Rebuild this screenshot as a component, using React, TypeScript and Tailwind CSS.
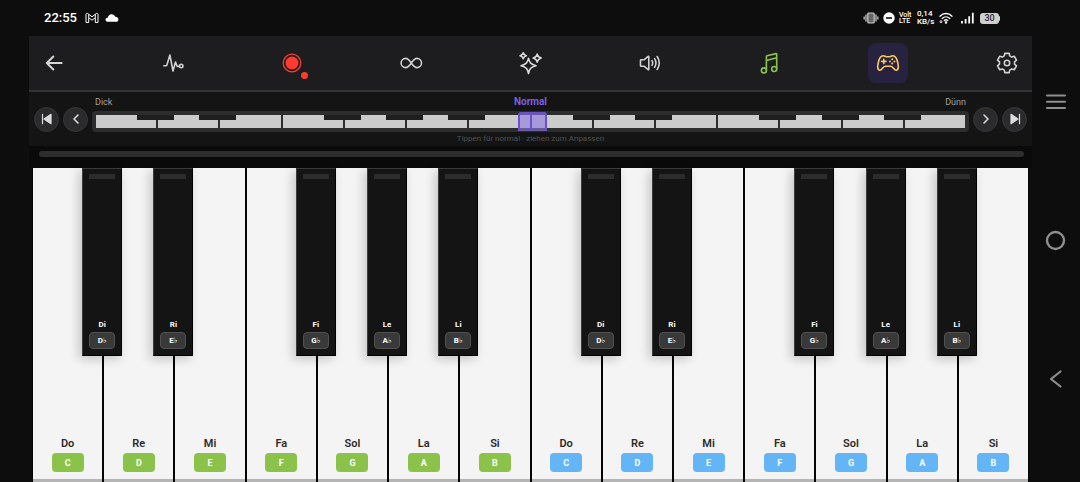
import type { ReactNode } from "react";
import { useState } from "react";

type Sharp = { solfege: string; note: string };
type Key = { solfege: string; note: string; sharp?: Sharp };

const OCTAVE: Key[] = [
  { solfege: "Do", note: "C", sharp: { solfege: "Di", note: "D" } },
  { solfege: "Re", note: "D", sharp: { solfege: "Ri", note: "E" } },
  { solfege: "Mi", note: "E" },
  { solfege: "Fa", note: "F", sharp: { solfege: "Fi", note: "G" } },
  { solfege: "Sol", note: "G", sharp: { solfege: "Le", note: "A" } },
  { solfege: "La", note: "A", sharp: { solfege: "Li", note: "B" } },
  { solfege: "Si", note: "B" },
];

const KEYS = [
  ...OCTAVE.map((k) => ({ ...k, octave: 1 })),
  ...OCTAVE.map((k) => ({ ...k, octave: 2 })),
];

// Outline of a six-toothed gear centred on (12, 12).
const GEAR_PATH =
  [0, 60, 120, 180, 240, 300]
    .flatMap((tooth) =>
      [
        [-21, 7.6],
        [-13, 9.9],
        [13, 9.9],
        [21, 7.6],
      ].map(([offset, radius]) => {
        const a = ((tooth + offset - 90) * Math.PI) / 180;
        return `${(12 + radius * Math.cos(a)).toFixed(2)} ${(12 + radius * Math.sin(a)).toFixed(2)}`;
      }),
    )
    .map((p, i) => (i === 0 ? `M${p}` : `L${p}`))
    .join("") + "Z";

function Icon({ children, className = "size-6" }: { children: ReactNode; className?: string }) {
  return (
    <svg
      viewBox="0 0 24 24"
      className={className}
      fill="none"
      stroke="currentColor"
      strokeWidth="1.6"
      strokeLinecap="round"
      strokeLinejoin="round"
      aria-hidden="true"
    >
      {children}
    </svg>
  );
}

function StatusBar() {
  return (
    <header className="flex h-9 shrink-0 items-center pr-20 pl-11 text-white">
      <time className="text-[13px] leading-4 font-medium">22:55</time>
      <svg viewBox="0 0 14 12" className="ml-2 h-3 w-3.5" fill="none" stroke="currentColor" strokeWidth="1" strokeLinejoin="round" aria-hidden="true">
        <path d="M1 10.5V2.3C1 1.3 2.1 1 2.8 1.6L7 4.8l4.200-3.200C11.900 1 13 1.300 13 2.300v8.200h-2.700V5.700L7 8.200 3.700 5.700v4.800z" />
        <path d="M3.700 2.300v3.400M10.300 2.300v3.400" />
      </svg>
      <svg viewBox="0 0 14 10" className="ml-1.5 h-2.5 w-3.5" fill="currentColor" aria-hidden="true">
        <path d="M3.200 8.800C1.600 8.800.5 7.900.5 6.700s.9-1.900 2.200-2C3.200 2.700 4.500 1.200 6.600 1.200c1.800 0 3.100 1 3.600 2.600 1.900 0 3.200 1.100 3.200 2.600 0 1.400-1 2.400-2.500 2.400z" />
      </svg>
      <div className="ml-auto flex items-center">
        <svg viewBox="0 0 16 12" className="h-3 w-4" aria-hidden="true">
          <rect x="4.800" y="1" width="6.400" height="10" rx="1" fill="#666" stroke="#ccc" strokeWidth="1.200" />
          <path d="M3 2.500v7M13 2.500v7M1.200 4.500v3M14.800 4.500v3" stroke="#aaa" strokeWidth="1.500" />
        </svg>
        <svg viewBox="0 0 12 12" className="ml-1 size-3" aria-hidden="true">
          <circle cx="6" cy="6" r="5.700" fill="#fff" />
          <path d="M3 6h6" stroke="#0d0d0d" strokeWidth="1.600" />
        </svg>
        <div className="ml-1 w-3.5 text-[7px] leading-[6px] font-medium">
          <div>Volt</div>
          <div>LTE</div>
        </div>
        <div className="ml-1 w-4 text-[8px] leading-[8px] font-medium whitespace-nowrap">
          <div>0,14</div>
          <div>KB/s</div>
        </div>
        <svg viewBox="0 0 14 12" className="ml-1.5 h-3 w-3.5" fill="none" stroke="#fff" strokeWidth="1.300" strokeLinecap="round" aria-hidden="true">
          <path d="M1 4.200C4.300.6 9.700.6 13 4.200M3.200 6.500c2.200-2.200 5.400-2.200 7.600 0M5.300 8.500c1-.9 2.400-.9 3.400 0" />
          <circle cx="7" cy="10.400" r=".6" fill="#fff" />
          <path d="M2 8.500v2M1 9.800l1 1 1-1" strokeWidth="1" />
        </svg>
        <svg viewBox="0 0 13 12" className="ml-2 h-3 w-[13px]" stroke="#fff" strokeWidth="1.800" aria-hidden="true">
          <path d="M1 11.500V9M4.600 11.500V7M8.200 11.500V4.200M11.800 11.500V.8" />
        </svg>
        <div className="ml-1.5 flex items-center">
          <span className="flex h-[11px] w-[19px] items-center justify-center rounded-[3px] bg-[#cfcfcf] text-[9px] leading-[11px] font-medium text-[#2a2a2a]">30</span>
          <span className="h-[5px] w-px rounded-r-full bg-[#cfcfcf]" />
        </div>
      </div>
    </header>
  );
}

const TOOLS: { label: string; tone: string; icon: ReactNode }[] = [
  {
    label: "Zurück",
    tone: "text-[#d6d6d6]",
    icon: (
      <Icon>
        <path d="M19.600 12H5M11.300 5.500 4.800 12l6.500 6.500" strokeWidth="2" />
      </Icon>
    ),
  },
  {
    label: "Puls",
    tone: "text-[#d0d0d0]",
    icon: (
      <Icon>
        <path d="M2.800 14.700h2.300c.3 0 .6-.2.700-.5L8.900 4l3.100 16 2.500-9 1.500 4c.1.300.4.400.7.400h1.700" />
        <circle cx="20.200" cy="15" r="1.700" />
      </Icon>
    ),
  },
  {
    label: "Aufnahme",
    tone: "text-[#ff3b30]",
    icon: (
      <Icon>
        <circle cx="12" cy="12" r="8.800" strokeWidth="1.300" />
        <circle cx="12" cy="12" r="6.500" fill="currentColor" stroke="none" />
      </Icon>
    ),
  },
  {
    label: "Schleife",
    tone: "text-[#d0d0d0]",
    icon: (
      <Icon>
        <path d="M12.300 12c1.700-2.400 3.200-4.600 5.600-4.600a4.600 4.600 0 0 1 0 9.200c-2.400 0-3.900-2.200-5.600-4.600S9.100 7.400 6.700 7.400a4.600 4.600 0 0 0 0 9.200c2.400 0 3.900-2.200 5.600-4.600z" />
      </Icon>
    ),
  },
  {
    label: "Effekte",
    tone: "text-[#dadada]",
    icon: (
      <Icon>
        <path d="M9.500 7.200c.9 4.400 2.400 6.200 7.500 7.500-5.100 1.300-6.600 3.100-7.500 7.800-.9-4.700-2.400-6.500-7.500-7.800 5.100-1.300 6.600-3.100 7.500-7.500z" />
        <path d="M4.200 1.800c.5 1.900 1.100 2.500 3.100 3-2 .5-2.600 1.100-3.100 3-.5-1.900-1.100-2.500-3.100-3 2-.5 2.600-1.100 3.100-3z" />
        <path d="M18.200 3.100c.6 2.600 1.300 3.300 4 4-2.700.7-3.400 1.400-4 4-.6-2.600-1.300-3.300-4-4 2.700-.7 3.400-1.400 4-4z" />
      </Icon>
    ),
  },
  {
    label: "Lautstärke",
    tone: "text-[#d0d0d0]",
    icon: (
      <Icon>
        <path d="M3 8.700h3.300l3.900-3.400c.3-.2.600 0 .6.300v12.800c0 .3-.3.500-.6.300l-3.900-3.400H3c-.3 0-.5-.2-.5-.5V9.200c0-.3.2-.5.500-.5z" />
        <path d="M14 9.700c.8 1.400.8 3.200 0 4.600M16.600 7.600c1.600 2.600 1.600 6.200 0 8.800M19.200 5.500c2.500 3.900 2.500 9.100 0 13" />
      </Icon>
    ),
  },
  {
    label: "Lieder",
    tone: "text-[#8bc34a]",
    icon: (
      <Icon>
        <circle cx="6.900" cy="19.400" r="2.500" />
        <circle cx="17.200" cy="18" r="2.500" />
        <path d="M9.400 19.400V5.600c0-.4.200-.7.600-.8l9-2.200c.4-.1.700.2.700.6V18M9.400 9.500l10.300-2.700" />
      </Icon>
    ),
  },
  {
    label: "Spiel",
    tone: "bg-[#272240] text-[#ffca57]",
    icon: (
      <Icon>
        <path d="M7.300 4.800c1.700 0 1.900 1 4.700 1s3-1 4.700-1c3.500 0 4.400 3.300 5.200 7.500.7 3.600.4 6.500-1.500 6.900-2.400.5-2.900-4-5.800-4H9.400c-2.900 0-3.400 4.500-5.800 4-1.900-.4-2.200-3.300-1.500-6.900.8-4.200 1.700-7.500 5.200-7.500z" />
        <path d="M7.800 8.200v4.400M5.600 10.400H10" />
        <g fill="currentColor" stroke="none">
          <circle cx="16.200" cy="8.200" r="1" />
          <circle cx="16.200" cy="12.600" r="1" />
          <circle cx="14" cy="10.400" r="1" />
          <circle cx="18.400" cy="10.400" r="1" />
        </g>
      </Icon>
    ),
  },
  {
    label: "Einstellungen",
    tone: "text-[#d0d0d0]",
    icon: (
      <Icon>
        <path d={GEAR_PATH} />
        <circle cx="12" cy="12" r="2.700" />
      </Icon>
    ),
  },
];

function Toolbar() {
  return (
    <nav className="flex h-14 shrink-0 items-center justify-between border-b-2 border-[#333335] bg-[#1d1d1f] px-[5px]">
      {TOOLS.map((t) => (
        <button
          key={t.label}
          type="button"
          aria-label={t.label}
          className={`relative flex size-10 items-center justify-center rounded-lg ${t.tone}`}
        >
          {t.icon}
          {t.label === "Aufnahme" && (
            <span className="absolute right-1 bottom-1 size-[7px] rounded-full bg-[#ff3b30]" />
          )}
        </button>
      ))}
    </nav>
  );
}

function RoundButton({ label, children }: { label: string; children: ReactNode }) {
  return (
    <button
      type="button"
      aria-label={label}
      className="flex size-[25px] shrink-0 items-center justify-center rounded-full border border-[#363638] bg-[#2b2b2d] text-[#dcdcdc]"
    >
      {children}
    </button>
  );
}

function WidthStrip() {
  const [width, setWidth] = useState(50);
  return (
    <section className="flex shrink-0 items-center gap-1 bg-[#141414] px-[5px]">
      <RoundButton label="Zum Anfang">
        <svg viewBox="0 0 12 12" className="size-3" fill="currentColor" aria-hidden="true">
          <path d="M1.500.8v10.400" stroke="currentColor" strokeWidth="1.200" />
          <path d="M10 1.300v9.400L3 6z" stroke="currentColor" strokeLinejoin="round" strokeWidth="1.200" />
        </svg>
      </RoundButton>
      <RoundButton label="Nach links">
        <svg viewBox="0 0 12 12" className="size-3" fill="none" stroke="currentColor" strokeWidth="1.600" strokeLinecap="round" strokeLinejoin="round" aria-hidden="true">
          <path d="M8 2 4 6l4 4" />
        </svg>
      </RoundButton>
      <div className="flex min-w-0 flex-1 flex-col pt-1 pb-0.5">
        <div className="mb-[3px] grid grid-cols-3 items-center px-[3px] text-[9px] leading-3 text-[#a0a0a0]">
          <span>Dick</span>
          <label htmlFor="key-width" className="text-center text-[10px] font-bold text-[#7a5fe0]">
            Normal
          </label>
          <span className="text-right">Dünn</span>
        </div>
        <div className="relative h-[21px] rounded bg-[#2d2d2e] px-[3px] py-1">
          <div className="flex h-[13px]">
            {KEYS.map((k) => (
              <div key={k.octave + k.note} className="relative flex-1 px-px">
                <div className="h-full bg-[#cbcbcb]" />
                {k.sharp && <div className="absolute top-0 -right-[17px] z-10 h-[5px] w-[37px] bg-[#1f1f1f]" />}
              </div>
            ))}
          </div>
          <div className="absolute top-px left-1/2 z-20 -ml-3 flex h-[19px] w-[29px] -translate-x-px rounded-t-[3px] border-2 border-b-0 border-[#6a50cf] bg-[#8e78e8]/60">
            <div className="w-3 border-r-2 border-[#6a50cf]" />
          </div>
          <input
            id="key-width"
            type="range"
            min={0}
            max={100}
            value={width}
            onChange={(e) => setWidth(Number(e.target.value))}
            className="absolute inset-0 z-30 h-full w-full cursor-pointer opacity-0"
          />
        </div>
        <p className="text-center text-[8px] leading-[13px] text-[#525252] -mb-px">Tippen für normal · ziehen zum Anpassen</p>
      </div>
      <RoundButton label="Nach rechts">
        <svg viewBox="0 0 12 12" className="size-3" fill="none" stroke="currentColor" strokeWidth="1.600" strokeLinecap="round" strokeLinejoin="round" aria-hidden="true">
          <path d="m4 2 4 4-4 4" />
        </svg>
      </RoundButton>
      <RoundButton label="Zum Ende">
        <svg viewBox="0 0 12 12" className="size-3" fill="currentColor" aria-hidden="true">
          <path d="M10.500.8v10.400" stroke="currentColor" strokeWidth="1.200" />
          <path d="M2 1.300v9.400L9 6z" stroke="currentColor" strokeLinejoin="round" strokeWidth="1.200" />
        </svg>
      </RoundButton>
    </section>
  );
}

function Piano() {
  return (
    <ul className="mx-[3px] flex min-h-0 flex-1 bg-[#050505]">
      {KEYS.map((k) => (
        <li key={k.octave + k.note} className="relative flex-1 px-px">
          <button
            type="button"
            className="flex h-full w-full flex-col items-center justify-end border-b-[3px] border-[#b5b5b5] bg-[#f4f4f4] pb-[7px]"
          >
            <span className="mb-[3px] text-[11px] leading-3 font-semibold text-[#2b2b2b]">{k.solfege}</span>
            <span
              className={`flex h-[19px] w-8 items-center justify-center rounded text-[9px] leading-3 font-bold text-white ${
                k.octave === 1 ? "bg-[#8bc34a]" : "bg-[#64b5f6]"
              }`}
            >
              {k.note}
            </span>
          </button>
          {k.sharp && (
            <button
              type="button"
              className="absolute top-0 -right-[19px] z-10 flex h-3/5 w-10 flex-col items-center border border-t-[#3a3a3a] border-r-black border-b-black border-l-[#3c3c3c] bg-[#141414] pt-[5px] pb-1.5 text-white shadow-[-3px_3px_10px_rgba(0,0,0,0.2)]"
            >
              <span className="h-[5px] w-[26px] bg-[#2c2c2c]" />
              <span className="mt-auto mb-px text-[8px] leading-3 font-bold">{k.sharp.solfege}</span>
              <span className="flex h-[17px] w-[26px] items-center justify-center rounded border border-[#505050] bg-[#393939] text-[8px] leading-3 font-bold">
                {k.sharp.note}
                <span className="font-['DejaVu_Sans',sans-serif] text-[8px]">♭</span>
              </span>
            </button>
          )}
        </li>
      ))}
    </ul>
  );
}

function SystemNav() {
  return (
    <aside className="flex w-12 shrink-0 flex-col items-center justify-between pt-[90px] pb-[91px] text-[#8f8f8f]">
      <button type="button" aria-label="Letzte Apps">
        <Icon>
          <path d="M3 5.500h18M3 11.800h18M3 18h18" strokeWidth="2" />
        </Icon>
      </button>
      <button type="button" aria-label="Startseite">
        <Icon>
          <circle cx="11.500" cy="11.500" r="8.500" strokeWidth="2.400" />
        </Icon>
      </button>
      <button type="button" aria-label="Zurück">
        <Icon>
          <path d="M16.500 4.500 7 12l9.500 7.500" strokeWidth="2.200" />
        </Icon>
      </button>
    </aside>
  );
}

export default function App() {
  return (
    <div className="flex h-dvh bg-[#0d0d0d] font-[Roboto,sans-serif]">
      <div className="flex min-w-0 flex-1 flex-col">
        <div className="-mr-12">
          <StatusBar />
        </div>
        <main className="ml-[29px] flex min-h-0 flex-1 flex-col">
          <Toolbar />
          <WidthStrip />
          <div className="flex h-[22px] shrink-0 items-start bg-[#0a0a0a] pt-[5px] pr-2 pl-2.5">
            <div className="h-1.5 flex-1 rounded-full bg-[#2d2d2e]" />
          </div>
          <Piano />
        </main>
      </div>
      <SystemNav />
    </div>
  );
}
